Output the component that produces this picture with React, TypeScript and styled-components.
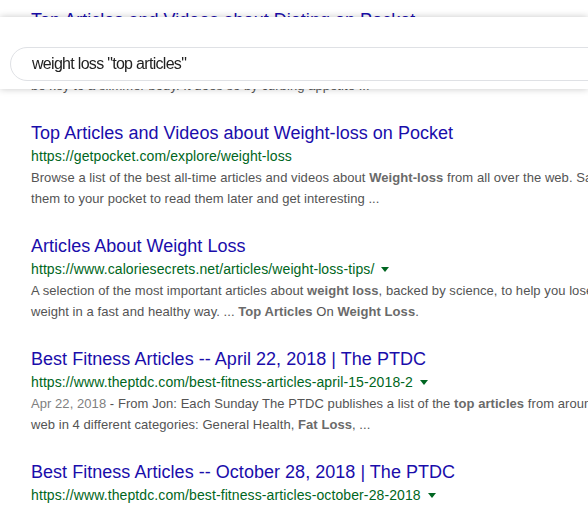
import React from "react";
import styled, { createGlobalStyle } from "styled-components";

type Part = { text: string; bold?: boolean; muted?: boolean };

type ResultType = {
  title: string;
  url: string;
  menu?: boolean;
  lines: Part[][];
};

const results: ResultType[] = [
  {
    title: "Top Articles and Videos about Dieting on Pocket",
    url: "https://getpocket.com/explore/dieting",
    lines: [
      [{ text: "Browse a list of the best all-time articles and videos about " }, { text: "Dieting", bold: true }, { text: " from all over the web. It may" }],
      [{ text: "be key to a slimmer body. It does so by curbing appetite ..." }],
    ],
  },
  {
    title: "Top Articles and Videos about Weight-loss on Pocket",
    url: "https://getpocket.com/explore/weight-loss",
    lines: [
      [{ text: "Browse a list of the best all-time articles and videos about " }, { text: "Weight-loss", bold: true }, { text: " from all over the web. Save" }],
      [{ text: "them to your pocket to read them later and get interesting ..." }],
    ],
  },
  {
    title: "Articles About Weight Loss",
    url: "https://www.caloriesecrets.net/articles/weight-loss-tips/",
    menu: true,
    lines: [
      [{ text: "A selection of the most important articles about " }, { text: "weight loss", bold: true }, { text: ", backed by science, to help you lose" }],
      [{ text: "weight in a fast and healthy way. ... " }, { text: "Top Articles", bold: true }, { text: " On " }, { text: "Weight Loss", bold: true }, { text: "." }],
    ],
  },
  {
    title: "Best Fitness Articles -- April 22, 2018 | The PTDC",
    url: "https://www.theptdc.com/best-fitness-articles-april-15-2018-2",
    menu: true,
    lines: [
      [{ text: "Apr 22, 2018", muted: true }, { text: " - From Jon: Each Sunday The PTDC publishes a list of the " }, { text: "top articles", bold: true }, { text: " from around the" }],
      [{ text: "web in 4 different categories: General Health, " }, { text: "Fat Loss", bold: true }, { text: ", ..." }],
    ],
  },
  {
    title: "Best Fitness Articles -- October 28, 2018 | The PTDC",
    url: "https://www.theptdc.com/best-fitness-articles-october-28-2018",
    menu: true,
    lines: [
      [{ text: "Oct 28, 2018", muted: true }, { text: " - From Jon: Each Sunday The PTDC publishes a list of the " }, { text: "top articles", bold: true }, { text: " from around the" }],
      [{ text: "web in 4 different categories: General Health, " }, { text: "Fat Loss", bold: true }, { text: ", ..." }],
    ],
  },
];

const App = () => {
  return (
    <>
      <GlobalStyle />
      <Page>
        <Results>
          {results.map((r) => (
            <Result key={r.url}>
              <Title href="#">{r.title}</Title>
              <UrlRow>
                <Cite>{r.url}</Cite>
                {r.menu && <Arrow />}
              </UrlRow>
              <Snippet>
                {r.lines.map((line, i) => (
                  <Line key={i}>
                    {line.map((p, j) =>
                      p.bold ? <Em key={j}>{p.text}</Em> : p.muted ? <Date key={j}>{p.text}</Date> : <span key={j}>{p.text}</span>
                    )}
                  </Line>
                ))}
              </Snippet>
            </Result>
          ))}
        </Results>
        <Header>
          <SearchBox>
            <SearchInput defaultValue={'weight loss "top articles"'} />
          </SearchBox>
        </Header>
      </Page>
    </>
  );
};

export default App;

const GlobalStyle = createGlobalStyle`
  html, body {
    margin: 0;
    padding: 0;
    background: #fff;
    overflow: hidden;
  }
  body {
    font-family: "Liberation Sans", Arial, sans-serif;
  }
`;

const Page = styled.div`
  width: 588px;
  height: 505px;
  overflow: hidden;
  background: #fff;
`;

const Header = styled.div`
  position: fixed;
  top: 17px;
  left: 0;
  width: 588px;
  height: 72px;
  padding: 30px 0 0 10px;
  box-sizing: border-box;
  background: #fff;
  box-shadow: 0 0 7px rgba(0, 0, 0, 0.22);
  overflow: hidden;
`;

const SearchBox = styled.div`
  width: 640px;
  height: 34px;
  box-sizing: border-box;
  border: 1px solid #dfe1e5;
  border-radius: 17px;
  display: flex;
  align-items: center;
  padding-left: 21px;
`;

const SearchInput = styled.input`
  flex: 1;
  border: none;
  outline: none;
  padding: 0;
  font-family: "Liberation Sans", Arial, sans-serif;
  font-size: 16px;
  letter-spacing: -0.7px;
  color: #222;
  background: transparent;
`;

const Results = styled.div`
  padding: 8px 0 0 31px;
  display: flex;
  flex-direction: column;
  gap: 25px;
`;

const Result = styled.div`
  display: flex;
  flex-direction: column;
  width: 620px;
`;

const Title = styled.a`
  font-size: 18px;
  line-height: 24px;
  letter-spacing: 0.03px;
  color: #1a0dab;
  text-decoration: none;
  white-space: nowrap;
`;

const UrlRow = styled.div`
  display: flex;
  align-items: center;
  height: 22px;
  margin-bottom: 1px;
`;

const Cite = styled.cite`
  font-style: normal;
  font-size: 14px;
  letter-spacing: 0.1px;
  color: #006621;
  white-space: nowrap;
`;

const Arrow = styled.span`
  width: 0;
  height: 0;
  margin: 1px 0 0 7px;
  border-style: solid;
  border-width: 5px 4px 0 4px;
  border-color: #006621 transparent transparent transparent;
`;

const Snippet = styled.div`
  font-size: 13px;
  line-height: 20.5px;
  letter-spacing: 0.06px;
  color: #545454;
`;

const Line = styled.div`
  white-space: nowrap;
`;

const Em = styled.b`
  color: #6a6a6a;
`;

const Date = styled.span`
  color: #808080;
`;
